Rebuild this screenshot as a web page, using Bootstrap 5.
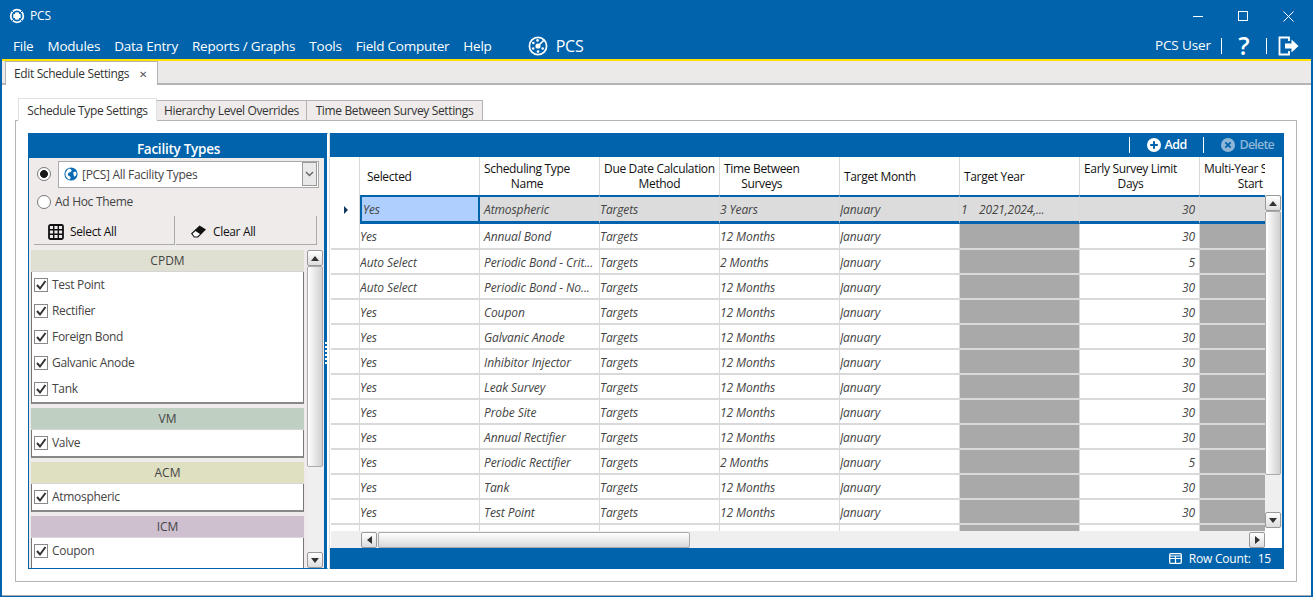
<!DOCTYPE html>
<html lang="en"><head><meta charset="utf-8"><title>PCS</title>
<link href="https://cdn.jsdelivr.net/npm/bootstrap@5.3.0/dist/css/bootstrap.min.css" rel="stylesheet">
<style>
html,body{margin:0;height:597px;overflow:hidden;background:#fff}
body{font-family:"Open Sans","Liberation Sans",sans-serif;font-size:12px;color:#333}
.app-win{width:1313px;height:597px;display:flex;flex-direction:column;background:#0063ac;padding:0 2px 1px 2px}
.title-row{height:32px;color:#fff;padding-left:7px}
.title-name{margin-left:5px;font-size:12px;letter-spacing:-.2px}
.win-ctrl{margin-left:auto;gap:35px;padding-right:17px}
.win-ctrl svg{display:block}
.menu-row{height:27px;color:#fff;padding-left:11px;padding-right:12px;border-bottom:0}
.menu-list{gap:14px}
.menu-list .nav-link{padding:1px 0 0;color:#fff;font-size:13.5px;letter-spacing:-.22px;line-height:27px}
.brand-box{margin-left:36px;gap:8px;font-size:16px;letter-spacing:-.2px}
.user-box{margin-left:auto;color:#fff;font-size:13.5px;letter-spacing:-.1px}
.v-tick{width:1px;height:16px;background:#fff;margin:0 10px}
.qmark{font-size:25px;font-weight:600;line-height:27px;letter-spacing:0;width:24px;text-align:center}
.exit-ico{margin-left:1px}
.yellow-rule{height:2px;background:#ffe000;flex:none}
.doc-strip{height:24px;background:#eceae8;border-bottom:2px solid #b4b4b4;padding-left:3px;flex:none}
.doc-tab{height:24px;width:153px;background:#fff;border:1px solid #b4b4b4;border-bottom:0;display:flex;align-items:center;padding-left:8px;gap:10px;letter-spacing:-.36px;font-size:12px;color:#333}
.doc-close{font-size:10px;color:#555;line-height:1}
.doc-body{flex:1;background:#fff;padding:13px 13px 0;border-bottom:1px solid #aaa;min-height:0}
.set-tabs{border:0;padding-left:3px;height:23px;flex-wrap:nowrap;align-items:flex-end}
.set-tabs .nav-link{background:#eeebea;border:1px solid #b4b4b4;border-radius:0;color:#333;font-size:12px;letter-spacing:-.36px;padding:0;height:21px;line-height:20px;text-align:center;margin:0}
.set-tabs .nav-link.active{background:#fff;height:23px;line-height:23px;border-bottom:1px solid #fff;color:#333;position:relative;z-index:2}
.tw1{width:139px}.tw2{width:151px;margin-left:-1px!important}.tw3{width:177px;margin-left:-1px!important}
.tab-frame{height:462px;width:1282px;border:1px solid #b4b4b4;padding:12px 11px 0 12px;margin-top:-1px;display:flex}
.fac-panel{width:300px;height:436px;flex:none;display:flex;flex-direction:column;border-top:1px solid #0063ac;border-left:1px solid #0063ac;border-right:1px solid #fff;border-bottom:1px solid #0063ac;background:#eeebea;overflow:hidden}
.fac-head{height:24px;background:#0063ac;color:#fff;text-align:center;font-weight:600;font-size:13.5px;line-height:30px;letter-spacing:-.25px;flex:none;margin-right:-1px}
.fac-inner{flex:1;display:flex;min-height:0}
.fac-main{width:295px;flex:none;display:flex;flex-direction:column;min-height:0}
.split-bar{width:4px;background:#0063ac;flex:none;display:flex;flex-direction:column;align-items:center;justify-content:center;padding-bottom:20px}
.split-dots{width:2px;height:22px;background:repeating-linear-gradient(#fff 0 2px,transparent 2px 4px)}
.pick-row{height:30px;padding:2px 5px 0 8px;gap:7px;flex:none}
.form-check-input.opt{width:14px;height:14px;margin:0;flex:none;border:1px solid #777;background-color:#fff;background-image:none}
.form-check-input.opt:checked{background-color:#fff;border-color:#777;background-image:radial-gradient(circle,#1a1a1a 0 3.6px,transparent 4.2px)}
.combo{flex:1;height:27px;background:#fff;border:1px solid #aaa;display:flex;align-items:center;padding-left:5px;gap:4px;letter-spacing:-.3px;font-size:12px;color:#444}
.combo-label{padding-top:2px}
.combo-drop{margin-left:auto;width:15px;height:24px;background:#e9e9e9;border:1px solid #999;margin-right:1px;display:flex;align-items:center;justify-content:center}
.adhoc{height:28px;padding-left:8px;gap:4px;letter-spacing:-.3px;font-size:12px;color:#444;flex:none}
.act-row{gap:1px;padding-left:5px;height:32px;flex:none}
.act-btn{width:141px;height:29px;background:#eeebea;border:0;border-right:1px solid #aaa;border-bottom:1px solid #aaa;border-radius:0;font-size:12px;letter-spacing:-.35px;color:#111;padding:3px 0 0 14px;gap:6px;display:flex;align-items:center;justify-content:flex-start}
.act-btn:hover{background:#eeebea;color:#111}
.pick-body{flex:1;display:flex;padding:2px 1px 0 2px;min-height:0;overflow:hidden}
.sect-col{width:273px;flex:none;display:flex;flex-direction:column;gap:4px;overflow:hidden}
.sect{flex:none;background:#fff;border-left:1px solid #777;border-right:1px solid #777;border-bottom:2px solid #888}
.sect-open{border-bottom:0}
.sect-head{height:22px;margin:0 -1px;text-align:center;font-size:12px;line-height:21px;color:#444;border-bottom:1px solid #d5d5d5}
.sh-cp{background:#dfe0d2}.sh-vm{background:#bfcfc2}.sh-ac{background:#dfdfc2}.sh-ic{background:#cfc0d0}
.sect-item{height:26px;padding-left:2px;gap:4px;letter-spacing:-.3px;color:#444;font-size:12px}
.form-check-input.tick{width:14px;height:14px;margin:0;border:1px solid #888;border-radius:0;flex:none;background-color:#fff;background-size:12px;background-image:url("data:image/svg+xml,%3csvg xmlns='http://www.w3.org/2000/svg' viewBox='0 0 12 12'%3e%3cpath fill='none' stroke='%23333' stroke-width='2' d='M2 6l3 3.5L10.5 2'/%3e%3c/svg%3e")}
.bar-v{width:16px;flex:none;display:flex;flex-direction:column;background:#efefef}
.bar-h{height:17px;flex:none;display:flex;background:#efefef;padding-left:30px;gap:1px;padding-top:1px}
.bar-btn{flex:none;background:linear-gradient(#fff,#ddd);border:1px solid #999;border-radius:2px;display:flex;align-items:center;justify-content:center}
.bar-v .bar-btn{height:16px;width:16px}
.bar-h .bar-btn{height:16px;width:16px}
.thumb-v{background:linear-gradient(90deg,#fff,#d0d0d0);border:1px solid #aaa;border-radius:2px;margin:0}
.thumb-h{background:linear-gradient(#fff,#d8d8d8);border:1px solid #aaa;border-radius:2px;height:16px}
.tri-u{width:0;height:0;border:4px solid transparent;border-top:0;border-bottom:5px solid #333}
.tri-d{width:0;height:0;border:4px solid transparent;border-bottom:0;border-top:5px solid #333}
.tri-l{width:0;height:0;border:4px solid transparent;border-left:0;border-right:5px solid #333}
.tri-r{width:0;height:0;border:4px solid transparent;border-right:0;border-left:5px solid #333}
.grid-wrap{width:955px;height:436px;margin-left:1px;flex:none;background:#0063ac;display:flex;flex-direction:column;border-left:1px solid #ddd;border-right:1px solid #0063ac}
.tool-row{height:24px;color:#fff;flex:none;justify-content:flex-end;padding-right:9px;font-size:12.5px;font-weight:600;letter-spacing:-.6px}
.tool-tick{width:1px;height:16px;background:#fff}
.tool-item{gap:4px;margin-left:17px}
.tool-sep2{margin-left:16px}
.tool-off{color:#8fb6d6;gap:5px;letter-spacing:-.8px}
.grid-mid{flex:1;display:flex;background:#fff;min-height:0;margin-right:1px;border-left:1px solid #fff}
.grid-left{width:934px;flex:none;display:flex;flex-direction:column;min-height:0}
.grid-clip{flex:1;overflow:hidden;min-height:0}
.sched{table-layout:fixed;width:989px;margin:0;border-collapse:separate;border-spacing:0;font-size:12px;color:#444}
.sched>:not(caption)>*>*{padding:2px 0 0;border:0;border-right:1px solid #d9d9d9;border-bottom:2px solid #d9d9d9;background:transparent;box-shadow:none;color:#444;font-style:italic;letter-spacing:-.1px;vertical-align:middle;white-space:nowrap;overflow:hidden;height:25px;line-height:16px}
.sched>thead>tr>th{font-style:normal;font-weight:400;color:#111;height:38px;padding:0 0 0 4px;line-height:15px;letter-spacing:-.33px;border-bottom:0}
.sched>thead>tr>th.th-sel{padding-left:7px}
.hd-stack{display:inline-block;text-align:center}
.sched>tbody>tr.rowsel>*{height:29px;background:#dcdcdc;border-top:2px solid #0063ac;border-bottom:3px solid #0063ac;padding-top:1px}
.sched>tbody>tr.row2>*{height:26px}
.sched>tbody>tr.rowsel>td.cell-cur{background:#afd0ff;border:2px solid #0063ac;border-bottom:3px solid #0063ac;padding-left:1px}
.sched>tbody>tr.rowsel>td.rh{background:#fff;border-top:0;border-bottom:0;text-align:center}
.sched>tbody>tr.rowsel>td.yr-cell{padding-left:1px;letter-spacing:-.2px}
.sched>tbody>tr>td.na{background:#a9a9a9;border-right-color:#d9d9d9}
.sched>tbody>tr>td.nm{padding-left:4px}
.sched>tbody>tr>td.num{text-align:right;padding-right:4px}
.rh-tri{display:inline-block;width:0;height:0;border:4px solid transparent;border-right:0;border-left:4px solid #12395e;margin-left:1px}
.vside{width:17px;flex:none;display:flex;flex-direction:column}
.vside-top{height:38px;background:#fff;flex:none}
.vside .bar-v{flex:1;width:17px;margin-bottom:20px;padding:0 1px 0 0}
.status-row{height:21px;color:#fff;justify-content:flex-end;padding-right:12px;gap:7px;font-size:12px;letter-spacing:-.2px;flex:none}
</style></head>
<body>
<div class="app-win">
  <div class="title-row d-flex align-items-center">
    <svg width="16" height="16" viewBox="0 0 16 16"><circle cx="8" cy="8" r="7.2" fill="#fff"/><circle cx="8" cy="8" r="4.6" fill="none" stroke="#0063ac" stroke-width="1.6"/><circle cx="8" cy="8" r="1.9" fill="#fff"/><path d="M3 3l3 3M13 3l-3 3M3 13l3-3M13 13l-3-3" stroke="#0063ac" stroke-width="1"/></svg>
    <span class="title-name">PCS</span>
    <div class="win-ctrl d-flex align-items-center">
      <svg width="10" height="10" viewBox="0 0 10 10"><path d="M0 5.5h10" stroke="#fff"/></svg>
      <svg width="10" height="10" viewBox="0 0 10 10"><rect x=".5" y=".5" width="9" height="9" fill="none" stroke="#fff"/></svg>
      <svg width="11" height="11" viewBox="0 0 11 11"><path d="M.5.5l10 10M10.500.5l-10 10" stroke="#fff"/></svg>
    </div>
  </div>
  <div class="menu-row d-flex align-items-center">
    <nav class="nav menu-list flex-nowrap">
      <a class="nav-link" href="#">File</a><a class="nav-link" href="#">Modules</a><a class="nav-link" href="#">Data Entry</a><a class="nav-link" href="#">Reports / Graphs</a><a class="nav-link" href="#">Tools</a><a class="nav-link" href="#">Field Computer</a><a class="nav-link" href="#">Help</a>
    </nav>
    <div class="brand-box d-flex align-items-center">
      <svg width="20" height="20" viewBox="0 0 20 20"><circle cx="10" cy="10" r="8.6" fill="none" stroke="#fff" stroke-width="1.7"/><circle cx="10" cy="10" r="2.6" fill="#fff"/><circle cx="5.3" cy="7" r="1.3" fill="#fff"/><circle cx="5.2" cy="12.5" r="1.3" fill="#fff"/><circle cx="10" cy="15.6" r="1.3" fill="#fff"/><circle cx="14.7" cy="12.5" r="1.3" fill="#fff"/><circle cx="9.5" cy="4.4" r="1.3" fill="#fff"/><path d="M10 10l6-5.8" stroke="#fff" stroke-width="1.6"/></svg>
      <span>PCS</span>
    </div>
    <div class="user-box d-flex align-items-center">
      <span>PCS User</span><span class="v-tick"></span><span class="qmark">?</span><span class="v-tick"></span>
      <svg class="exit-ico" width="21" height="20" viewBox="0 0 21 20"><path d="M11 5V1.500H1.500v17H11V15" fill="none" stroke="#fff" stroke-width="1.800"/><path d="M7 7.500h6.500V3.500l7 6.500-7 6.500v-4H7z" fill="#fff"/></svg>
    </div>
  </div>
  <div class="yellow-rule"></div>
  <div class="doc-strip d-flex">
    <div class="doc-tab"><span>Edit Schedule Settings</span><span class="doc-close">✕</span></div>
  </div>
  <div class="doc-body">
    <ul class="nav nav-tabs set-tabs">
      <li class="nav-item"><a class="nav-link active tw1" href="#">Schedule Type Settings</a></li>
      <li class="nav-item"><a class="nav-link tw2" href="#">Hierarchy Level Overrides</a></li>
      <li class="nav-item"><a class="nav-link tw3" href="#">Time Between Survey Settings</a></li>
    </ul>
    <div class="tab-frame">
      <div class="fac-panel">
        <div class="fac-head">Facility Types</div>
        <div class="fac-inner">
          <div class="fac-main">
            <div class="pick-row d-flex align-items-center">
              <input class="form-check-input opt" type="radio" name="src" checked aria-label="theme">
              <div class="combo">
                <svg width="14" height="14" viewBox="0 0 14 14"><circle cx="7" cy="7" r="6.600" fill="#0b6cb5"/><path d="M5 1.500c2 .5 3 1 2.500 2.500S5 5 4 6.500 5 9 6 9.500 6.500 12 5.500 12.500 2 10 1.500 8 3 2.500 5 1.500zM10 5c1.500-.5 2.500 0 2.500 1.500s-1 3-2 3-.5-1.500-1-2.500S9 5.500 10 5z" fill="#fff"/></svg>
                <span class="combo-label">[PCS] All Facility Types</span>
                <span class="combo-drop"><svg width="9" height="6" viewBox="0 0 9 6"><path d="M1 1l3.500 3.500L8 1" fill="none" stroke="#666" stroke-width="1.400"/></svg></span>
              </div>
            </div>
            <label class="adhoc d-flex align-items-center">
              <input class="form-check-input opt" type="radio" name="src"><span>Ad Hoc Theme</span>
            </label>
            <div class="act-row d-flex">
              <button class="btn act-btn" type="button"><svg width="16" height="16" viewBox="0 0 16 16"><rect x="1" y="1" width="14" height="14" rx="1.500" fill="none" stroke="#111" stroke-width="1.800"/><path d="M5.700 1v14M10.300 1v14M1 5.700h14M1 10.300h14" stroke="#111" stroke-width="1.400"/></svg>Select All</button>
              <button class="btn act-btn" type="button"><svg width="17" height="15" viewBox="0 0 17 15"><path d="M1 9.500L9.500 1.500 16 5.500 8 13.500H4z" fill="#111"/><path d="M2.500 9.800L5.500 7l4.500 3-2.600 2.500H4.500z" fill="#fff"/></svg>Clear All</button>
            </div>
            <div class="pick-body">
              <div class="sect-col">
                <div class="sect">
                  <div class="sect-head sh-cp">CPDM</div>
                  <div class="sect-item d-flex align-items-center"><input class="form-check-input tick" type="checkbox" checked aria-label="Test Point"><span>Test Point</span></div>
                  <div class="sect-item d-flex align-items-center"><input class="form-check-input tick" type="checkbox" checked aria-label="Rectifier"><span>Rectifier</span></div>
                  <div class="sect-item d-flex align-items-center"><input class="form-check-input tick" type="checkbox" checked aria-label="Foreign Bond"><span>Foreign Bond</span></div>
                  <div class="sect-item d-flex align-items-center"><input class="form-check-input tick" type="checkbox" checked aria-label="Galvanic Anode"><span>Galvanic Anode</span></div>
                  <div class="sect-item d-flex align-items-center"><input class="form-check-input tick" type="checkbox" checked aria-label="Tank"><span>Tank</span></div>
                </div>
                <div class="sect">
                  <div class="sect-head sh-vm">VM</div>
                  <div class="sect-item d-flex align-items-center"><input class="form-check-input tick" type="checkbox" checked aria-label="Valve"><span>Valve</span></div>
                </div>
                <div class="sect">
                  <div class="sect-head sh-ac">ACM</div>
                  <div class="sect-item d-flex align-items-center"><input class="form-check-input tick" type="checkbox" checked aria-label="Atmospheric"><span>Atmospheric</span></div>
                </div>
                <div class="sect sect-open">
                  <div class="sect-head sh-ic">ICM</div>
                  <div class="sect-item d-flex align-items-center"><input class="form-check-input tick" type="checkbox" checked aria-label="Coupon"><span>Coupon</span></div>
                  <div class="sect-item"></div>
                </div>
              </div>
              <div class="bar-v ms-auto">
                <div class="bar-btn"><span class="tri-u"></span></div>
                <div class="thumb-v" style="height:201px"></div>
                <div class="flex-grow-1"></div>
                <div class="bar-btn"><span class="tri-d"></span></div>
              </div>
            </div>
          </div>
          <div class="split-bar"><div class="split-dots"></div></div>
        </div>
      </div>
      <div class="grid-wrap">
        <div class="tool-row d-flex align-items-center">
          <span class="tool-tick"></span>
          <span class="tool-item d-flex align-items-center"><svg width="14" height="14" viewBox="0 0 14 14"><circle cx="7" cy="7" r="7" fill="#fff"/><path d="M7 3.200v7.600M3.200 7h7.600" stroke="#0063ac" stroke-width="2"/></svg>Add</span>
          <span class="tool-tick tool-sep2"></span>
          <span class="tool-item tool-off d-flex align-items-center"><svg width="14" height="14" viewBox="0 0 14 14"><circle cx="7" cy="7" r="7" fill="#8fb6d6"/><path d="M4.300 4.300l5.400 5.400M9.700 4.300l-5.400 5.400" stroke="#0063ac" stroke-width="1.800"/></svg>Delete</span>
        </div>
        <div class="grid-mid">
          <div class="grid-left">
            <div class="grid-clip">
              <table class="table sched">
                <colgroup><col style="width:29px"><col style="width:120px"><col style="width:120px"><col style="width:120px"><col style="width:120px"><col style="width:120px"><col style="width:120px"><col style="width:120px"><col style="width:120px"></colgroup>
                <thead><tr><th></th><th class="th-sel">Selected</th><th><span class="hd-stack">Scheduling Type<br>Name</span></th><th><span class="hd-stack">Due Date Calculation<br>Method</span></th><th><span class="hd-stack">Time Between<br>Surveys</span></th><th>Target Month</th><th>Target Year</th><th><span class="hd-stack">Early Survey Limit<br>Days</span></th><th><span class="hd-stack">Multi-Year Survey<br>Start</span></th></tr></thead>
                <tbody>
                <tr class="rowsel"><td class="rh"><span class="rh-tri"></span></td><td class="cell-cur">Yes</td><td class="nm">Atmospheric</td><td>Targets</td><td>3 Years</td><td>January</td><td class="yr-cell">1&nbsp;&nbsp;&nbsp;&nbsp;2021,2024,...</td><td class="num">30</td><td></td></tr>
                <tr class="row2"><td></td><td>Yes</td><td class="nm">Annual Bond</td><td>Targets</td><td>12 Months</td><td>January</td><td class="na"></td><td class="num">30</td><td class="na"></td></tr>
                <tr><td></td><td>Auto Select</td><td class="nm">Periodic Bond - Crit...</td><td>Targets</td><td>2 Months</td><td>January</td><td class="na"></td><td class="num">5</td><td class="na"></td></tr>
                <tr><td></td><td>Auto Select</td><td class="nm">Periodic Bond - No...</td><td>Targets</td><td>12 Months</td><td>January</td><td class="na"></td><td class="num">30</td><td class="na"></td></tr>
                <tr><td></td><td>Yes</td><td class="nm">Coupon</td><td>Targets</td><td>12 Months</td><td>January</td><td class="na"></td><td class="num">30</td><td class="na"></td></tr>
                <tr><td></td><td>Yes</td><td class="nm">Galvanic Anode</td><td>Targets</td><td>12 Months</td><td>January</td><td class="na"></td><td class="num">30</td><td class="na"></td></tr>
                <tr><td></td><td>Yes</td><td class="nm">Inhibitor Injector</td><td>Targets</td><td>12 Months</td><td>January</td><td class="na"></td><td class="num">30</td><td class="na"></td></tr>
                <tr><td></td><td>Yes</td><td class="nm">Leak Survey</td><td>Targets</td><td>12 Months</td><td>January</td><td class="na"></td><td class="num">30</td><td class="na"></td></tr>
                <tr><td></td><td>Yes</td><td class="nm">Probe Site</td><td>Targets</td><td>12 Months</td><td>January</td><td class="na"></td><td class="num">30</td><td class="na"></td></tr>
                <tr><td></td><td>Yes</td><td class="nm">Annual Rectifier</td><td>Targets</td><td>12 Months</td><td>January</td><td class="na"></td><td class="num">30</td><td class="na"></td></tr>
                <tr><td></td><td>Yes</td><td class="nm">Periodic Rectifier</td><td>Targets</td><td>2 Months</td><td>January</td><td class="na"></td><td class="num">5</td><td class="na"></td></tr>
                <tr><td></td><td>Yes</td><td class="nm">Tank</td><td>Targets</td><td>12 Months</td><td>January</td><td class="na"></td><td class="num">30</td><td class="na"></td></tr>
                <tr><td></td><td>Yes</td><td class="nm">Test Point</td><td>Targets</td><td>12 Months</td><td>January</td><td class="na"></td><td class="num">30</td><td class="na"></td></tr>
                <tr><td></td><td></td><td></td><td></td><td></td><td></td><td class="na"></td><td></td><td class="na"></td></tr>
                </tbody>
              </table>
            </div>
            <div class="bar-h">
              <div class="bar-btn"><span class="tri-l"></span></div>
              <div class="thumb-h" style="width:312px"></div>
              <div class="flex-grow-1"></div>
              <div class="bar-btn"><span class="tri-r"></span></div>
            </div>
          </div>
          <div class="vside">
            <div class="vside-top"></div>
            <div class="bar-v">
              <div class="bar-btn"><span class="tri-u"></span></div>
              <div class="thumb-v" style="height:264px"></div>
              <div class="flex-grow-1"></div>
              <div class="bar-btn"><span class="tri-d"></span></div>
            </div>
          </div>
        </div>
        <div class="status-row d-flex align-items-center">
          <svg width="13" height="11" viewBox="0 0 13 11"><rect x=".7" y=".7" width="11.600" height="9.600" rx="1" fill="none" stroke="#fff" stroke-width="1.300"/><path d="M.7 5.500h11.600M6.500 3v7M.7 3h11.600" stroke="#fff" stroke-width="1.200"/></svg>
          <span>Row Count:</span><span>15</span>
        </div>
      </div>
    </div>
  </div>
</div>
<script src="https://cdn.jsdelivr.net/npm/bootstrap@5.3.0/dist/js/bootstrap.bundle.min.js"></script>
</body></html>
